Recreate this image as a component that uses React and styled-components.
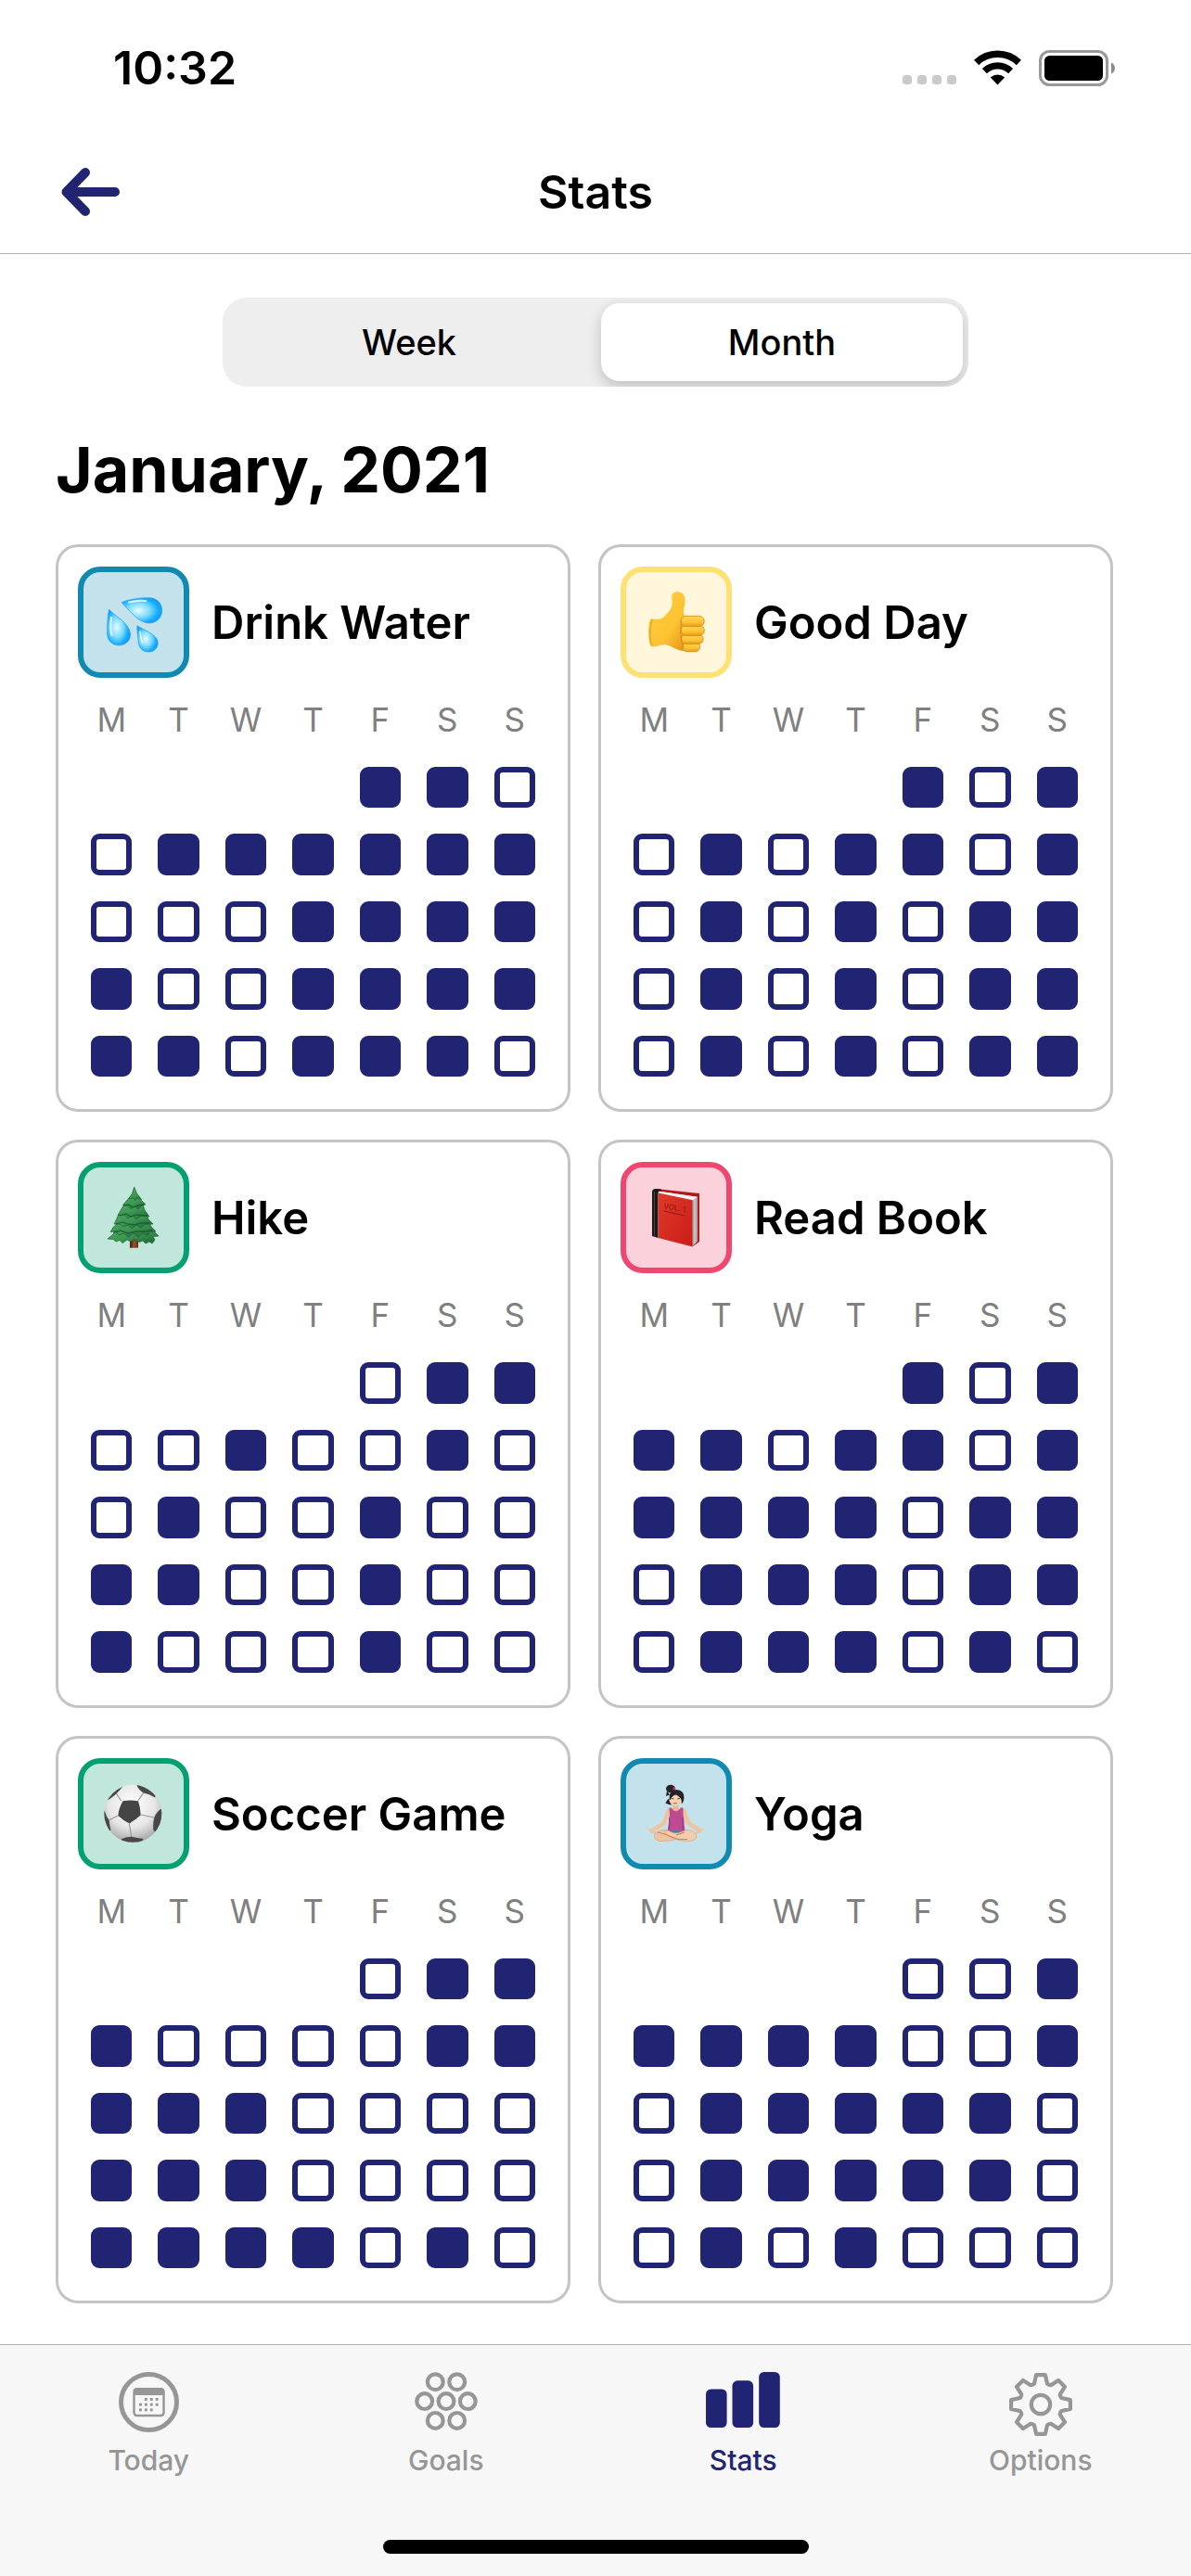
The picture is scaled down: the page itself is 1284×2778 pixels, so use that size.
import React, { useState } from "react";
import styled, { createGlobalStyle } from "styled-components";

const NAVY = "#202473";
const MUTED = "#969696";
const FONT = 'Inter, Roboto, "Liberation Sans", sans-serif';

const GlobalStyle = createGlobalStyle`
  *, *::before, *::after { box-sizing: border-box; }
  body { margin: 0; background: #fff; color: #000; font-family: ${FONT}; }
  button { font-family: inherit; color: inherit; border: 0; padding: 0; background: none; cursor: pointer; }
`;

const Screen = styled.div`
  display: flex;
  flex-direction: column;
  min-height: 100vh;
`;

const StatusBar = styled.div`
  display: flex;
  align-items: center;
  justify-content: space-between;
  height: 141px;
  padding: 5px 82px 0 122px;
`;

const Clock = styled.time`
  font-size: 50px;
  line-height: 60px;
  font-weight: 600;
`;

const StatusIcons = styled.div`
  display: flex;
  align-items: center;
  gap: 19px;
`;

const Header = styled.header`
  display: grid;
  grid-template-columns: 1fr auto 1fr;
  align-items: center;
  height: 133px;
  padding: 0 66px;
  border-bottom: 1px solid #b2b2b2;
`;

const BackButton = styled.button`
  display: flex;
  justify-self: start;
`;

const HeaderTitle = styled.div`
  font-size: 50px;
  line-height: 60px;
  font-weight: 600;
`;

const SegmentsRow = styled.div`
  display: flex;
  justify-content: center;
  padding: 47px 24px 0;
`;

const Segments = styled.div`
  display: grid;
  grid-template-columns: 1fr 1fr;
  gap: 12px;
  width: 804px;
  padding: 6px;
  border-radius: 26px;
  background: #eeeeee;
  overflow: hidden;
`;

const Segment = styled.button`
  height: 84px;
  border-radius: 20px;
  font-size: 38px;
  line-height: 46px;
  font-weight: 500;
  background: ${(p) => (p.$active ? "#fff" : "transparent")};
  box-shadow: ${(p) => (p.$active ? "0 6px 16px rgba(0, 0, 0, 0.2)" : "none")};
`;

const Main = styled.main`
  padding: 0 84px 44px 60px;
`;

const MonthTitle = styled.h1`
  margin: 47px 0 39px;
  font-size: 68px;
  line-height: 84px;
  font-weight: 700;
`;

const CardGrid = styled.div`
  display: grid;
  grid-template-columns: repeat(2, minmax(0, 1fr));
  gap: 30px;
`;

const Card = styled.section`
  padding: 21px;
  border: 3px solid #c4c4c6;
  border-radius: 24px;
`;

const CardHead = styled.div`
  display: flex;
  align-items: center;
  gap: 24px;
`;

const Tile = styled.div`
  display: flex;
  flex: none;
  align-items: center;
  justify-content: center;
  width: 120px;
  height: 120px;
  border: 6px solid ${(p) => p.$line};
  border-radius: 24px;
  background: ${(p) => p.$fill};
`;

const CardTitle = styled.h2`
  margin: 0;
  padding-top: 2px;
  font-size: 49px;
  line-height: 60px;
  font-weight: 600;
  white-space: nowrap;
`;

const Calendar = styled.table`
  width: 100%;
  table-layout: fixed;
  border-collapse: collapse;
`;

const DayName = styled.th`
  height: 82px;
  padding: 8px 0 0;
  font-size: 35px;
  line-height: 42px;
  font-weight: 400;
  color: #808080;
`;

const DayCell = styled.td`
  padding: 14px;
`;

const Mark = styled.div`
  aspect-ratio: 1;
  border: 6px solid ${NAVY};
  border-radius: 9px;
  background: ${(p) => (p.$done ? NAVY : "#fff")};
`;

const TabBar = styled.footer`
  display: flex;
  flex-direction: column;
  justify-content: space-between;
  align-items: center;
  height: 250px;
  margin-top: auto;
  padding: 29px 0 24px;
  border-top: 1px solid #b2b2b2;
  background: #f7f7f7;
`;

const Tabs = styled.nav`
  display: grid;
  grid-template-columns: repeat(4, 1fr);
  width: 100%;
  padding-right: 2px;
`;

const Tab = styled.a`
  display: flex;
  flex-direction: column;
  align-items: center;
  gap: 7px;
  font-size: 30px;
  line-height: 36px;
  font-weight: 500;
  text-decoration: none;
  color: ${(p) => (p.$active ? NAVY : MUTED)};
`;

const TabIcon = styled.span`
  display: flex;
  align-items: flex-start;
  height: 70px;
`;

const HomeIndicator = styled.div`
  width: 459px;
  height: 15px;
  border-radius: 8px;
  background: #000;
`;

const SignalIcon = () => (
  <svg width="58" height="38" viewBox="0 0 58 38" fill="#cacaca" aria-hidden="true">
    {[0, 16, 32, 48].map((x) => (
      <rect key={x} x={x} y="27" width="10" height="10" rx="3.5" />
    ))}
  </svg>
);

const WifiIcon = () => (
  <svg width="51" height="38" viewBox="0 0 51 38" fill="none" stroke="#000" aria-hidden="true">
    <path d="M2.6 13.4A33.2 33.2 0 0 1 48.4 13.4" strokeWidth="7.6" />
    <path d="M11.4 22.6A20.2 20.2 0 0 1 39.6 22.6" strokeWidth="7.2" />
    <path d="M25.5 37.4L17.8 29.6A11.4 11.4 0 0 1 33.2 29.6Z" fill="#000" stroke="none" />
  </svg>
);

const BatteryIcon = () => (
  <svg width="82" height="39" viewBox="0 0 82 39" aria-hidden="true">
    <rect x="1.5" y="1.5" width="72" height="36" rx="10" fill="none" stroke="#999" strokeWidth="3" />
    <rect x="6" y="6" width="63" height="27" rx="5.5" fill="#000" />
    <path d="M78 13.5C83.3 15.5 83.3 23.5 78 25.5Z" fill="#8a8a8a" />
  </svg>
);

const BackIcon = () => (
  <svg width="63" height="52" viewBox="0 0 63 52" fill="none" stroke={NAVY} strokeWidth="10" strokeLinecap="round" strokeLinejoin="round" aria-hidden="true">
    <path d="M58 26H6M26 5L5.5 26L26 47" />
  </svg>
);

const TodayIcon = () => {
  const dots = [[1, 0], [2, 0], [3, 0], [0, 1], [1, 1], [2, 1], [3, 1], [0, 2], [1, 2], [2, 2]];
  return (
    <svg width="65" height="65" viewBox="0 0 65 65" fill="none" stroke="currentColor" aria-hidden="true">
      <circle cx="32.5" cy="32.5" r="30" strokeWidth="5" />
      <rect x="16.5" y="18.2" width="32" height="28.8" rx="3" strokeWidth="2.4" />
      <path d="M16 25V20.5Q16 17.5 19 17.5H46Q49 17.5 49 20.5V25Z" fill="currentColor" stroke="none" />
      {dots.map(([c, r]) => (
        <rect key={`${c}${r}`} x={22 + c * 5.9} y={28 + r * 5.7} width="2.9" height="2.9" fill="currentColor" stroke="none" />
      ))}
    </svg>
  );
};

const GoalsIcon = () => (
  <svg width="68" height="63" viewBox="0 0 68 63" fill="none" stroke="currentColor" strokeWidth="4.2" aria-hidden="true">
    {[[22.3, 10.7], [45.7, 10.7], [10.7, 31.6], [34, 31.6], [57.3, 31.6], [22.3, 52.4], [45.7, 52.4]].map(([x, y]) => (
      <circle key={`${x}-${y}`} cx={x} cy={y} r="8.4" />
    ))}
  </svg>
);

const StatsIcon = () => (
  <svg width="80" height="60" viewBox="0 0 80 60" fill="currentColor" aria-hidden="true">
    <rect x="0" y="18.5" width="22.6" height="41.5" rx="5.5" />
    <rect x="28.5" y="9.3" width="22.6" height="50.7" rx="5.5" />
    <rect x="57.2" y="0" width="22.6" height="60" rx="5.5" />
  </svg>
);

const gearPath = (() => {
  const tooth = [[-8.8, -21.2], [-7, -22.4], [-4.9, -31.9], [4.9, -31.9], [7, -22.4]];
  const pts = [];
  for (let i = 0; i < 8; i += 1) {
    const a = (i * Math.PI) / 4;
    tooth.forEach(([x, y]) => {
      const px = 34 + x * Math.cos(a) - y * Math.sin(a);
      const py = 34 + x * Math.sin(a) + y * Math.cos(a);
      pts.push(`${px.toFixed(2)} ${py.toFixed(2)}`);
    });
  }
  return `M${pts.join("L")}Z`;
})();

const OptionsIcon = () => (
  <svg width="68" height="70" viewBox="0 -1 68 70" fill="none" stroke="currentColor" strokeWidth="4.2" strokeLinejoin="round" aria-hidden="true">
    <path d={gearPath} />
    <circle cx="34" cy="34" r="10.2" />
  </svg>
);

const Art = ({ label, children }) => (
  <svg width="108" height="108" viewBox="6 6 108 108" role="img" aria-label={label}>
    {children}
  </svg>
);

const WaterArt = () => (
  <Art label="Water drops">
    <defs>
      <radialGradient id="dropA" cx="0.42" cy="0.5" r="0.62">
        <stop offset="0" stopColor="#e6fbff" />
        <stop offset="0.45" stopColor="#7fdcff" />
        <stop offset="0.78" stopColor="#16adfd" />
        <stop offset="1" stopColor="#1295f3" />
      </radialGradient>
    </defs>
    <g fill="url(#dropA)" stroke="#1fa0ee" strokeWidth="0.7">
      <path d="M33.8 46.3C37.5 52 56.5 61 56.5 73C56.5 80.5 51 84.8 44.2 84.8C37 84.8 31.6 80 31.6 72C31.6 63 32 51 33.8 46.3Z" />
      <path d="M47.2 38.7C55 35 68 33.5 77 33.7C86 34 90.6 40 90.6 47.5C90.6 55.5 84 61 77 61C66 61 56 48 47.2 38.7Z" />
      <path d="M63.9 63.8C69 67.5 86.2 73 86.2 82.2C86.2 88.5 81.5 92 76 92C69.5 92 65.7 87.5 65.2 81C64.8 75 63.5 69 63.9 63.8Z" />
    </g>
    <g fill="none" stroke="#fff" strokeLinecap="round" opacity="0.8">
      <path d="M36 55C35 63 35 69 36.5 74" strokeWidth="2" />
      <path d="M55 38.5C61 37 68 36.3 73 37" strokeWidth="2" />
      <path d="M67 70C67.5 75 68 79 69.5 82" strokeWidth="1.6" />
    </g>
  </Art>
);

const ThumbArt = () => (
  <Art label="Thumbs up">
    <defs>
      <linearGradient id="thumbSkin" x1="0" y1="0" x2="1" y2="1">
        <stop offset="0" stopColor="#ffcf45" />
        <stop offset="0.6" stopColor="#fcc231" />
        <stop offset="1" stopColor="#df8c14" />
      </linearGradient>
      <linearGradient id="thumbFinger" x1="0" y1="0" x2="0" y2="1">
        <stop offset="0" stopColor="#ffd557" />
        <stop offset="0.6" stopColor="#fdc433" />
        <stop offset="1" stopColor="#e59a1c" />
      </linearGradient>
    </defs>
    <path d="M61.5 27C57 27 54.5 30 55.3 35C56.5 43 55 46 46.5 54.5C43.5 57.5 39 56.5 33.5 56.5C30.5 56.5 30 67 30.2 74C30.5 82 32 86.7 35.5 86.5C40 86.3 43.5 83.5 49 84.3C55 85.5 60 90.8 69 91L74 84L72 56C68 52.5 67 49.5 68.5 44C70.5 37 70.5 28 61.5 27Z" fill="url(#thumbSkin)" />
    <path d="M34 85.5C31 80 31 62 34.5 57" fill="none" stroke="#e9a727" strokeWidth="1.6" />
    <g fill="url(#thumbFinger)" stroke="#d98f18" strokeWidth="0.9">
      <rect x="67" y="82" width="18.5" height="9.7" rx="4.6" />
      <rect x="65.5" y="73.4" width="23.6" height="10" rx="4.8" />
      <rect x="65" y="63.4" width="25.3" height="11" rx="5.3" />
      <rect x="65" y="53.4" width="25.2" height="11.2" rx="5.4" />
    </g>
    <path d="M65.5 58C64 68 65 80 68 88" fill="none" stroke="#d18a18" strokeWidth="1.4" opacity="0.7" />
  </Art>
);

const TreeArt = () => (
  <Art label="Evergreen tree">
    <defs>
      <linearGradient id="treeTrunk" x1="0" y1="0" x2="1" y2="0">
        <stop offset="0" stopColor="#3c1d10" />
        <stop offset="0.55" stopColor="#9a5428" />
        <stop offset="1" stopColor="#5b2c14" />
      </linearGradient>
      <linearGradient id="treeLeaf" x1="0.2" y1="0" x2="0.8" y2="1">
        <stop offset="0" stopColor="#4fae61" />
        <stop offset="0.6" stopColor="#3d9852" />
        <stop offset="1" stopColor="#216b3a" />
      </linearGradient>
    </defs>
    <rect x="56" y="79" width="9" height="13.7" fill="url(#treeTrunk)" />
    <g fill="url(#treeLeaf)" stroke="#1f6236" strokeWidth="0.7" strokeLinejoin="round">
      <path d="M60 62L50 66L42 73L38 78L32 83L38 83.5L41 86L45 84.5L48 87.5L53 84L57 86L61 83L66 86.5L70 85L73 88L77 86L80 88L83 84L81 80.5L87 80L81 74Z" />
      <path d="M60 54L48 60L43 66L38.5 70L35 75.5L41 75L44 79L50 77L54 81L60 77L65 81L70 77L75 79.5L78 75.5L84 75L79 70L77 65Z" />
      <path d="M60 46L50 52L44 56L42 61L39 67L45 67L49 70L54 68L58 72L63 68L68 71L72 67.5L81 67L76 62L74 56Z" />
      <path d="M60 38L52 43L48 49L43 57.5L50 57L54 60.5L59 58L63 62L68 58L77 59L72 52L70 46Z" />
      <path d="M60.7 33L55 39L48.5 46.5L54 47L57 50.5L61 48L65 51L68 47.5L73 46L67 40Z" />
      <path d="M60.7 27L58.5 34L54.5 40L59 39L62 41.5L64 39L68.5 40.5L63.5 34Z" />
    </g>
    <g fill="none" stroke="#175430" strokeWidth="1.3" opacity="0.75">
      <path d="M49 47L55 46L59 49L65 47L71 46" />
      <path d="M45 58L52 56L57 59L63 57L70 58L75 58" />
      <path d="M41 67L48 65L54 67L61 68L67 66L77 66" />
      <path d="M38 76L46 74L54 77L63 75L71 75L80 74" />
    </g>
  </Art>
);

const BookArt = () => (
  <Art label="Closed book">
    <defs>
      <linearGradient id="bookCover" x1="0" y1="0" x2="1" y2="1">
        <stop offset="0" stopColor="#e23a2c" />
        <stop offset="1" stopColor="#c81d17" />
      </linearGradient>
    </defs>
    <path d="M38 29L85 34V86L78 91Z" fill="#b31917" />
    <path d="M40 31.5L82.7 37.7V85.5L77 91Z" fill="#d7d8da" />
    <path d="M40 31.5L82.7 37.7L77.7 41.5L41 33.5Z" fill="#f4f4f4" />
    <path d="M77.7 41.5L82.7 37.7V85.5L77.7 91Z" fill="#a9abae" />
    <path d="M80 40V88" stroke="#e3e4e6" strokeWidth="0.8" />
    <path d="M34 32.5Q34 29 38 29L44 29.5L43.5 31.5Q40.5 30.5 40.5 34V82L34 80Z" fill="#1c1819" />
    <path d="M36.5 32V80" stroke="#4d4546" strokeWidth="1" />
    <path d="M40.7 33.5L77.7 41.3V91.5L40.7 82Z" fill="url(#bookCover)" />
    <text x="46" y="50" fill="#861714" fontFamily={FONT} fontSize="8" transform="rotate(10 46 50)">VOL. 1</text>
    <path d="M46.5 53L69 58" stroke="#861714" strokeWidth="0.9" />
  </Art>
);

const BallArt = () => (
  <Art label="Soccer ball">
    <defs>
      <radialGradient id="ballShade" cx="0.48" cy="0.35" r="0.66">
        <stop offset="0" stopColor="#fff" />
        <stop offset="0.6" stopColor="#e6e6e6" />
        <stop offset="1" stopColor="#a5a5a5" />
      </radialGradient>
      <clipPath id="ballClip"><circle cx="59.3" cy="59.8" r="31" /></clipPath>
    </defs>
    <circle cx="59.3" cy="59.8" r="31.2" fill="url(#ballShade)" />
    <g clipPath="url(#ballClip)">
      <path d="M46.7 46L41 37.7M65 45.7L70.7 37.3M67.7 61L82 64M55.3 70.7L57.7 85M43.3 62L33.7 66.7" stroke="#9b9b9b" strokeWidth="1.2" />
      <path d="M48.5 46.3Q55.5 44.8 65 46.2Q67.5 53 67.7 61.5Q62 66.5 55.5 70.5Q48.5 67 43.3 62Q44 54 48.5 46.3Z" fill="#454545" />
      <g fill="#484848">
        <path d="M30 46L33.5 44.5Q41 40 48.5 30.5L46 25L28 38Z" />
        <path d="M63.5 29.5Q66 35 70.7 37.5Q77 38.5 83 42.5L86 36L70 24Z" />
        <path d="M91 54Q85 57 82.3 64Q80.5 71 81.5 78L86 82L95 64Z" />
        <path d="M46.5 87.5Q52 84.5 57.7 84.7Q64 86 70.5 87L68 94H50Z" />
        <path d="M27 56L29 57.5Q30.5 63 33.7 67Q34 72 35.5 78L30 78L25 62Z" />
      </g>
    </g>
  </Art>
);

const YogaArt = () => (
  <Art label="Woman in lotus position">
    <g fill="none" stroke="#edc3a0" strokeLinecap="round" strokeLinejoin="round">
      <path d="M51.5 57L47 70L34 78.5" strokeWidth="4.6" />
      <path d="M68.5 57L73 70L85.5 78" strokeWidth="4.6" />
      <path d="M31.5 77L37 80.5M88 77L82 80.5" strokeWidth="2.4" />
    </g>
    <path d="M56.3 48H62.5V54L68 54.5L66 60H53L51 54.5L56.3 54Z" fill="#e8b891" />
    <path d="M52.5 53.5L54.8 53.5Q59.5 61 65 53.5L67.5 53.5Q67.2 61 68.2 65L69.5 80H50.5L52.5 65Q53.5 60 52.5 53.5Z" fill="#bd4a93" />
    <path d="M52.5 64Q54 72 51.5 79M67 64Q66 72 68 79" stroke="#93336f" strokeWidth="0.9" fill="none" />
    <path d="M53 80L58 78H63L67 80L60 84Z" fill="#3a83bd" />
    <g stroke="#d9a57e" strokeWidth="0.7">
      <path d="M49 77Q36 78.5 36.3 84.5Q37 90 46 89.5Q56 89.5 65 86L70 82Q74 78.5 71 77.5Q64 80.5 58.5 82.5Q53 78.5 49 77Z" fill="#edc3a0" />
      <path d="M71 77.3Q82 78.5 81.7 84.5Q81.5 89.3 73 89.5Q63 89.5 56.5 86.5L49.5 82.5L47 79Q51 77 55 80Q61 83 71 77.3Z" fill="#f1ccad" />
    </g>
    <path d="M40 80Q50 82 56 85.5Q63 89 72 87.5M60 83L69 80" stroke="#bd8157" strokeWidth="1" fill="none" />
    <ellipse cx="54" cy="33" rx="5" ry="4.2" fill="#272326" />
    <path d="M50 35L49 41L53 39.5Z" fill="#272326" />
    <path d="M48.5 48.5Q52 41 56 44L55.5 50.5Q52 50.5 48.5 48.5Z" fill="#272326" />
    <ellipse cx="59.3" cy="44.3" rx="6.9" ry="7.5" fill="#f5d2b6" />
    <path d="M52.7 45Q51.5 34.5 60 34Q69 34.5 68.5 43Q68.3 47 65.8 49.5Q67 43 60 39.5Q55.5 40 53.8 45Z" fill="#272326" />
    <path d="M57 31L60 33L56.5 34.5Z" fill="#d23d85" />
    <path d="M54.8 43.5L57.5 44M61 44L64 43.5" stroke="#5a3a2d" strokeWidth="0.9" />
    <path d="M57.3 48.7H60.5" stroke="#b6564f" strokeWidth="1.1" strokeLinecap="round" />
  </Art>
);

const BLUE = { line: "#118ab2", fill: "#c3e2ec" };
const YELLOW = { line: "#ffe073", fill: "#fff6dc" };
const GREEN = { line: "#05a071", fill: "#c1e7dc" };
const PINK = { line: "#ef476f", fill: "#fbd1db" };

const DAYS = [
  ["M", "Monday"], ["T", "Tuesday"], ["W", "Wednesday"], ["T", "Thursday"],
  ["F", "Friday"], ["S", "Saturday"], ["S", "Sunday"],
];

// One string per week, Monday first: 1 = done, 0 = missed, "-" = outside the month.
const HABITS = [
  { name: "Drink Water", tone: BLUE, Icon: WaterArt, weeks: ["----110", "0111111", "0001111", "1001111", "1101110"] },
  { name: "Good Day", tone: YELLOW, Icon: ThumbArt, weeks: ["----101", "0101101", "0101011", "0101011", "0101011"] },
  { name: "Hike", tone: GREEN, Icon: TreeArt, weeks: ["----011", "0010010", "0100100", "1100100", "1000100"] },
  { name: "Read Book", tone: PINK, Icon: BookArt, weeks: ["----101", "1101101", "1111011", "0111011", "0111010"] },
  { name: "Soccer Game", tone: GREEN, Icon: BallArt, weeks: ["----011", "1000011", "1110000", "1110000", "1111010"] },
  { name: "Yoga", tone: BLUE, Icon: YogaArt, weeks: ["----001", "1111001", "0111110", "0111110", "0101000"] },
];

const TABS = [
  { name: "Today", Icon: TodayIcon },
  { name: "Goals", Icon: GoalsIcon },
  { name: "Stats", Icon: StatsIcon },
  { name: "Options", Icon: OptionsIcon },
];

function HabitCard({ name, tone, Icon, weeks }) {
  return (
    <Card>
      <CardHead>
        <Tile $line={tone.line} $fill={tone.fill}><Icon /></Tile>
        <CardTitle>{name}</CardTitle>
      </CardHead>
      <Calendar aria-label={name}>
        <thead>
          <tr>
            {DAYS.map(([letter, day]) => (
              <DayName key={day} scope="col" abbr={day}>{letter}</DayName>
            ))}
          </tr>
        </thead>
        <tbody>
          {weeks.map((week, w) => (
            <tr key={w}>
              {[...week].map((state, d) => (
                <DayCell key={d}>
                  {state !== "-" && <Mark $done={state === "1"} role="img" aria-label={state === "1" ? "Done" : "Missed"} />}
                </DayCell>
              ))}
            </tr>
          ))}
        </tbody>
      </Calendar>
    </Card>
  );
}

export default function App() {
  const [range, setRange] = useState("Month");
  return (
    <Screen>
      <GlobalStyle />
      <StatusBar>
        <Clock>10:32</Clock>
        <StatusIcons>
          <SignalIcon />
          <WifiIcon />
          <BatteryIcon />
        </StatusIcons>
      </StatusBar>
      <Header>
        <BackButton type="button" aria-label="Back"><BackIcon /></BackButton>
        <HeaderTitle>Stats</HeaderTitle>
      </Header>
      <SegmentsRow>
        <Segments>
          {["Week", "Month"].map((name) => (
            <Segment key={name} type="button" $active={range === name} aria-pressed={range === name} onClick={() => setRange(name)}>
              {name}
            </Segment>
          ))}
        </Segments>
      </SegmentsRow>
      <Main>
        <MonthTitle>January, 2021</MonthTitle>
        <CardGrid>
          {HABITS.map((habit) => <HabitCard key={habit.name} {...habit} />)}
        </CardGrid>
      </Main>
      <TabBar>
        <Tabs>
          {TABS.map(({ name, Icon }) => (
            <Tab key={name} href={`#${name.toLowerCase()}`} $active={name === "Stats"} aria-current={name === "Stats" ? "page" : undefined}>
              <TabIcon><Icon /></TabIcon>
              {name}
            </Tab>
          ))}
        </Tabs>
        <HomeIndicator />
      </TabBar>
    </Screen>
  );
}
